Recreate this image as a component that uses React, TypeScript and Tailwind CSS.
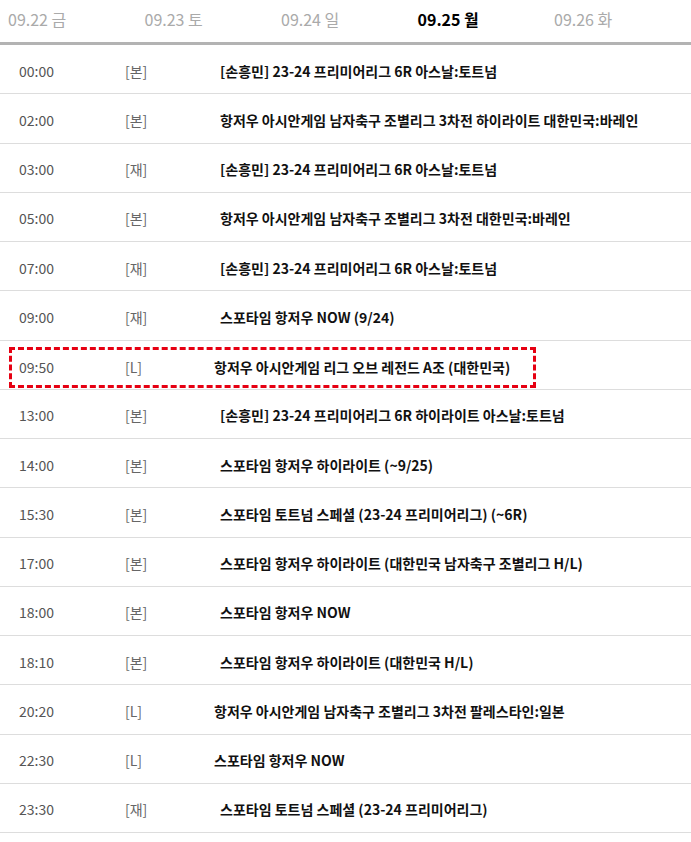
import React from 'react';

type Row = { time: string; tag: string; title: string };

const days = [
  { label: '09.22 금', active: false },
  { label: '09.23 토', active: false },
  { label: '09.24 일', active: false },
  { label: '09.25 월', active: true },
  { label: '09.26 화', active: false },
];

const rows: Row[] = [
  { time: '00:00', tag: '[본]', title: '[손흥민] 23-24 프리미어리그 6R 아스날:토트넘' },
  { time: '02:00', tag: '[본]', title: '항저우 아시안게임 남자축구 조별리그 3차전 하이라이트 대한민국:바레인' },
  { time: '03:00', tag: '[재]', title: '[손흥민] 23-24 프리미어리그 6R 아스날:토트넘' },
  { time: '05:00', tag: '[본]', title: '항저우 아시안게임 남자축구 조별리그 3차전 대한민국:바레인' },
  { time: '07:00', tag: '[재]', title: '[손흥민] 23-24 프리미어리그 6R 아스날:토트넘' },
  { time: '09:00', tag: '[재]', title: '스포타임 항저우 NOW (9/24)' },
  { time: '09:50', tag: '[L]', title: '항저우 아시안게임 리그 오브 레전드 A조 (대한민국)' },
  { time: '13:00', tag: '[본]', title: '[손흥민] 23-24 프리미어리그 6R 하이라이트 아스날:토트넘' },
  { time: '14:00', tag: '[본]', title: '스포타임 항저우 하이라이트 (~9/25)' },
  { time: '15:30', tag: '[본]', title: '스포타임 토트넘 스페셜 (23-24 프리미어리그) (~6R)' },
  { time: '17:00', tag: '[본]', title: '스포타임 항저우 하이라이트 (대한민국 남자축구 조별리그 H/L)' },
  { time: '18:00', tag: '[본]', title: '스포타임 항저우 NOW' },
  { time: '18:10', tag: '[본]', title: '스포타임 항저우 하이라이트 (대한민국 H/L)' },
  { time: '20:20', tag: '[L]', title: '항저우 아시안게임 남자축구 조별리그 3차전 팔레스타인:일본' },
  { time: '22:30', tag: '[L]', title: '스포타임 항저우 NOW' },
  { time: '23:30', tag: '[재]', title: '스포타임 토트넘 스페셜 (23-24 프리미어리그)' },
];

const font = { fontFamily: '"Noto Sans CJK KR", "Noto Sans", sans-serif' };

function RowCells({ row }: { row: Row }) {
  const live = row.tag === '[L]';
  return (
    <>
      <span className="w-[106px] shrink-0 text-[#555]">{row.time}</span>
      <span className={live ? 'w-[89px] shrink-0 text-[#666]' : 'w-[95px] shrink-0 text-[#666]'}>{row.tag}</span>
      <span className="font-semibold text-[#111] whitespace-nowrap">{row.title}</span>
    </>
  );
}

export default function App() {
  return (
    <div className="w-[691px] h-[842px] bg-white overflow-hidden" style={font}>
      {/* 날짜 탭 */}
      <div className="flex h-[45px] border-b-[3px] border-[#b3b3b3]">
        {days.map((d) => (
          <div
            key={d.label}
            className={
              d.active
                ? 'w-[136.5px] pl-2 pt-[7px] text-[16px] font-semibold text-black'
                : 'w-[136.5px] pl-2 pt-[7px] text-[16px] text-[#aaa]'
            }
          >
            {d.label}
          </div>
        ))}
      </div>

      {/* 편성표 */}
      <ul className="text-[14px]">
        {rows.map((row) =>
          row.time === '09:50' ? (
            <li key={row.time} className="h-[49.25px] border-b border-[#ddd] px-[9px] pt-[6px]">
              <div className="flex items-center w-[527px] h-[41px] border-[3px] border-dashed border-[#e60012] pl-[7px]">
                <RowCells row={row} />
              </div>
            </li>
          ) : (
            <li key={row.time} className="flex items-center h-[49.25px] border-b border-[#ddd] pl-[19px] pt-[4px]">
              <RowCells row={row} />
            </li>
          )
        )}
      </ul>
    </div>
  );
}
